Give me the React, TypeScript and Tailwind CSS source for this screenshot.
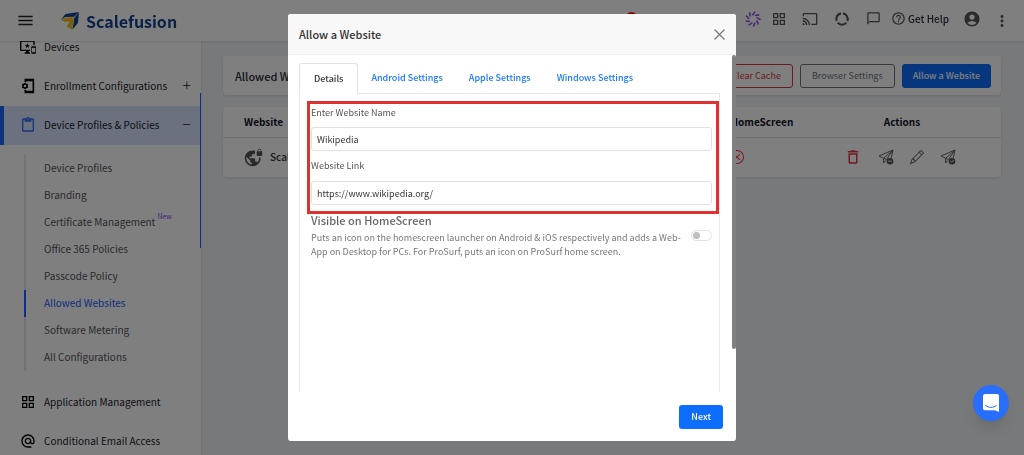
import { useState } from 'react'
import { BsPencil, BsXCircle } from 'react-icons/bs'
import {
  MdAccountCircle,
  MdAlternateEmail,
  MdCast,
  MdChatBubbleOutline,
  MdContentPaste,
  MdDeleteOutline,
  MdHelpOutline,
  MdMenu,
  MdMoreVert,
  MdOutlineGridView,
  MdOutlineImportantDevices,
  MdVpnLock,
} from 'react-icons/md'

const subItems = [
  { label: 'Device Profiles' },
  { label: 'Branding' },
  { label: 'Certificate Management', isNew: true },
  { label: 'Office 365 Policies' },
  { label: 'Passcode Policy' },
  { label: 'Allowed Websites', active: true },
  { label: 'Software Metering' },
  { label: 'All Configurations' },
]

const tabs = ['Details', 'Android Settings', 'Apple Settings', 'Windows Settings']

function Logo() {
  return (
    <a href="#" className="flex items-center gap-[7px] text-[#12408f]">
      <svg viewBox="0 0 17 17" className="size-[18px]" aria-hidden="true">
        <path d="M0 7.4 4.2 1.8 17 0 12.4 4.6 4 4.8Z" fill="#12408f" />
        <path d="M17 0 16 10.4 10.8 16.6 12.6 5.6Z" fill="#12408f" />
        <path d="M0 7.8 4 5.4 12.4 5 9.4 9.2 4.2 9.2Z" fill="#f5bd1f" />
        <path d="M12.4 5.4 10.6 16.8 5.4 13.6 8 9.4Z" fill="#f5bd1f" />
      </svg>
      <span className="text-[16px] leading-6 font-bold">Scalefusion</span>
    </a>
  )
}

function EnrollIcon() {
  return (
    <svg viewBox="0 0 24 24" className="size-4" fill="none" stroke="currentColor" aria-hidden="true">
      <path d="M8 6V2.5h12v19H8V18" strokeWidth="2.4" />
      <path d="M8 3.5h12M8 20.5h12" strokeWidth="3" />
      <circle cx="7.5" cy="12" r="3" strokeWidth="2.4" />
      <path d="M7.5 7v2M7.5 15v2M3.2 9.5l1.7 1M10.1 13.5l1.7 1M3.2 14.5l1.7-1M10.1 10.5l1.7-1" strokeWidth="2" />
    </svg>
  )
}

function SparkIcon() {
  return (
    <svg viewBox="0 0 24 24" className="size-4" fill="none" stroke="#8a50ea" strokeWidth="2.4" strokeLinecap="round" aria-hidden="true">
      {[0, 40, 80, 120, 160, 200, 240, 280, 320].map((a) => (
        <path key={a} d="M11.5 5.5 14.5 1.8" transform={`rotate(${a} 12 12)`} />
      ))}
    </svg>
  )
}

function UsageIcon() {
  return (
    <svg viewBox="0 0 24 24" className="size-4" fill="none" stroke="currentColor" strokeWidth="3.2" aria-hidden="true">
      {[0, 120, 240].map((a) => (
        <path key={a} d="M13.5 3.6A8.5 8.5 0 0 1 20 15" transform={`rotate(${a} 12 12)`} />
      ))}
    </svg>
  )
}

function SendIcon({ badge }: { badge: string }) {
  return (
    <svg viewBox="0 0 16 16" className="size-4" fill="none" stroke="currentColor" strokeLinejoin="round" aria-hidden="true">
      <path d="M8.4 10.5 5.6 9.3 5.6 14 7.8 11.4M5.6 9.3 1 7 15 1 13.2 9M15 1 5.6 9.3M15 1 8.4 10.5" strokeWidth="0.9" />
      <circle cx="12" cy="12.2" r="3.3" fill="currentColor" stroke="none" />
      <path d={badge} stroke="#fff" strokeWidth="1" />
    </svg>
  )
}

function TopBar() {
  return (
    <header className="fixed inset-x-0 top-0 z-10 flex h-[41px] items-center bg-white pr-[13px] pl-4 text-[#555] shadow">
      <button type="button" aria-label="Menu" className="mr-[26px] text-[#222]">
        <MdMenu size={19} />
      </button>
      <Logo />
      <div className="ml-auto flex items-center pb-1">
        <span className="mr-[107px] size-[13px] rounded-full bg-[#ff1a1a]" />
        <button type="button" aria-label="Assistant"><SparkIcon /></button>
        <button type="button" aria-label="Apps" className="ml-2.5"><MdOutlineGridView size={16} /></button>
        <button type="button" aria-label="Cast" className="ml-[15px]"><MdCast size={16} /></button>
        <button type="button" aria-label="Usage" className="ml-4"><UsageIcon /></button>
        <button type="button" aria-label="Messages" className="ml-4"><MdChatBubbleOutline size={15} /></button>
        <a href="#" className="ml-2.5 flex items-center gap-0.5 font-medium text-[#2a2a3a]">
          <MdHelpOutline size={15} className="text-[#555]" />
          Get Help
        </a>
        <button type="button" aria-label="Account" className="ml-3.5"><MdAccountCircle size={18} /></button>
        <button type="button" aria-label="More" className="ml-3 pt-1"><MdMoreVert size={18} /></button>
      </div>
    </header>
  )
}

function Sidebar() {
  const row = 'flex h-[39px] items-center gap-2 pr-[10px] pb-0.5 pl-5 text-[#1c1c2c]'
  const sign = 'ml-auto pb-1 text-[16px] font-light'
  return (
    <nav className="relative h-full w-[201px] shrink-0 overflow-hidden bg-white pt-7 shadow">
      <a href="#" className={row}>
        <MdOutlineImportantDevices size={16} className="text-black" />
        Devices
      </a>
      <a href="#" className={row}>
        <span className="text-black"><EnrollIcon /></span>
        Enrollment Configurations
        <span className={sign}>+</span>
      </a>
      <a href="#" className="flex h-[39px] items-center gap-2 border-l-4 border-[#1a66ff] bg-[#d6e2fd] pr-[10px] pb-0.5 pl-4 text-[#1c1c2c]">
        <MdContentPaste size={16} className="text-[#2f6cf6]" />
        Device Profiles &amp; Policies
        <span className={sign}>−</span>
      </a>
      <ul className="mt-2.5 mb-3 ml-6">
        {subItems.map((item) => (
          <li key={item.label} className={item.active ? 'border-l-2 border-[#2060ff] text-[#2060ff]' : 'border-l-2 border-[#e4e4e8] text-[#55555a]'}>
            <a href="#" className="flex h-[27px] items-center gap-0.5 pb-0.5 pl-[18px]">
              {item.label}
              {item.isNew && <sup className="pb-1 text-[7px] text-[#8b4df0]">New</sup>}
            </a>
          </li>
        ))}
      </ul>
      <a href="#" className={row}>
        <MdOutlineGridView size={16} className="text-black" />
        Application Management
      </a>
      <a href="#" className={row}>
        <MdAlternateEmail size={16} className="text-black" />
        Conditional Email Access
      </a>
      {/* scroll thumb */}
      <span className="absolute top-[93px] right-0 h-[155px] w-px bg-[#2060ff]" />
    </nav>
  )
}

function Websites() {
  return (
    <main className="flex-1 pt-14 pr-[23px] pl-[22px]">
      <section className="flex h-[39px] items-center gap-[7px] rounded-sm bg-white pr-[10px] pl-3 text-[9px] shadow-sm">
        <h1 className="mr-auto text-[11px] font-medium text-[#2a2a3a]">Allowed Websites</h1>
        <button type="button" className="h-6 rounded-[3px] border border-[#dc3545] px-[11px] text-[#dc3545]">Clear Cache</button>
        <button type="button" className="h-6 rounded-[3px] border border-[#6c757d] px-[11px] text-[#6c757d]">Browser Settings</button>
        <button type="button" className="h-6 rounded-[3px] bg-[#0d6efd] px-[11px] font-medium text-white">Allow a Website</button>
      </section>
      <table className="mt-3 w-full table-fixed rounded-sm bg-white shadow-sm">
        <thead>
          <tr className="h-[30px] border-b border-[#dfe1e5] text-[#14142a]">
            <th className="pl-[21px] text-left font-bold">Website</th>
            <th className="w-[132px] font-bold whitespace-nowrap">Visible on HomeScreen</th>
            <th className="w-[198px] font-bold">Actions</th>
          </tr>
        </thead>
        <tbody>
          <tr className="h-10">
            <td className="pl-[21px]">
              <span className="flex items-center gap-[7px] font-medium text-[#333]">
                <MdVpnLock size={19} className="text-[#555]" />
                Scalefusion
              </span>
            </td>
            <td>
              <BsXCircle size={14} className="mx-auto text-[#ff2233]" />
            </td>
            <td>
              <span className="flex items-center justify-center gap-4 pr-1 text-[#555]">
                <button type="button" aria-label="Delete" className="text-[#dc3545]"><MdDeleteOutline size={18} /></button>
                <button type="button" aria-label="Unpublish"><SendIcon badge="M10.2 12.2h3.6" /></button>
                <button type="button" aria-label="Edit"><BsPencil size={14} /></button>
                <button type="button" aria-label="Publish"><SendIcon badge="M10.5 12.2l1.1 1.1 2-2.2" /></button>
              </span>
            </td>
          </tr>
        </tbody>
      </table>
    </main>
  )
}

function WebsiteDialog() {
  const [tab, setTab] = useState('Details')
  const [name, setName] = useState('Wikipedia')
  const [link, setLink] = useState('https://www.wikipedia.org/')
  const [visible, setVisible] = useState(false)
  const field = 'block h-6 w-full rounded-[3px] border border-[#dee2e6] bg-white px-[5px] text-[#333] outline-none'

  return (
    <div className="fixed inset-0 z-20 flex justify-center bg-black/50 py-3.5 text-[9px]">
      <div role="dialog" aria-labelledby="dialog-title" className="relative flex h-full w-[448px] flex-col overflow-hidden rounded-[3px] bg-white">
        <div className="flex h-[41px] shrink-0 items-center justify-between border-b border-[#eee] bg-[#f8f8f8] px-[11px]">
          <h2 id="dialog-title" className="text-[11px] font-medium text-[#333]">Allow a Website</h2>
          <button type="button" aria-label="Close" className="text-[#777]">
            <svg viewBox="0 0 11 11" className="size-[11px]" stroke="currentColor" strokeWidth="1.2">
              <path d="M.5.5l10 10M10.5.5l-10 10" />
            </svg>
          </button>
        </div>
        <div className="flex min-h-0 flex-1 flex-col pt-2 pr-4 pl-[11px]">
          <div role="tablist" className="flex h-[31px] shrink-0">
            {tabs.map((t) => (
              <button
                key={t}
                type="button"
                role="tab"
                aria-selected={t === tab}
                onClick={() => setTab(t)}
                className={
                  t === tab
                    ? 'rounded-t-[3px] border border-b-0 border-[#dee2e6] px-3.5 font-medium text-[#333]'
                    : 'border-b border-[#e6e8eb] px-[13px] font-medium text-[#1a78ff]'
                }
              >
                {t}
              </button>
            ))}
            <span className="flex-1 border-b border-[#e6e8eb]" />
          </div>
          <div className="flex-1 border-x border-[#e6e8eb] pt-[7px] pl-[7px]">
            <div className="border-3 border-[#e03131] pr-1 pb-[6px] pl-px">
              <label htmlFor="site-name" className="block pt-px pb-[6px] leading-4 text-[#555]">Enter Website Name</label>
              <input id="site-name" value={name} onChange={(e) => setName(e.target.value)} className={field} />
              <label htmlFor="site-link" className="block py-[7px] leading-4 text-[#555]">Website Link</label>
              <input id="site-link" value={link} onChange={(e) => setLink(e.target.value)} className={field} />
            </div>
            <div className="flex items-start justify-between pr-[7px] pl-1">
              <div className="w-[374px]">
                <h3 id="visible-title" className="text-[11px] leading-3 font-medium text-[#666]">Visible on HomeScreen</h3>
                <p className="mt-[5px] leading-3.5 text-[#777]">
                  Puts an icon on the homescreen launcher on Android &amp; iOS respectively and adds a Web-App on Desktop for PCs. For ProSurf, puts an icon on ProSurf home screen.
                </p>
              </div>
              <input
                type="checkbox"
                role="switch"
                aria-labelledby="visible-title"
                checked={visible}
                onChange={(e) => setVisible(e.target.checked)}
                className="mt-4 flex h-[11px] w-[21px] appearance-none items-center rounded-full border border-[#dee2e6] px-px before:size-[7px] before:rounded-full before:bg-[#bfbfbf] checked:justify-end"
              />
            </div>
          </div>
        </div>
        <div className="flex h-[49px] shrink-0 items-center justify-end pr-[13px]">
          <button type="button" className="h-6 rounded-[3px] bg-[#0d6efd] px-3 font-medium text-white">Next</button>
        </div>
        {/* scroll thumb */}
        <span className="absolute top-[41px] right-0 h-[294px] w-1 rounded-sm bg-[#808080]" />
      </div>
    </div>
  )
}

export default function App() {
  return (
    <div className="h-screen overflow-hidden bg-[#f0f3f7] font-['Noto_Sans_CJK_SC','Noto_Sans',sans-serif] text-[10px] leading-4">
      <TopBar />
      <div className="flex h-full">
        <Sidebar />
        <Websites />
      </div>
      <WebsiteDialog />
      <button
        type="button"
        aria-label="Open chat"
        className="fixed right-[15px] bottom-[34px] z-30 flex size-9 items-center justify-center rounded-full bg-[#286efa] shadow-lg"
      >
        <svg viewBox="0 0 16 18" className="h-[18px] w-4" aria-hidden="true">
          <path d="M2 0h12a2 2 0 0 1 2 2v16l-4-1.8H2a2 2 0 0 1-2-2V2a2 2 0 0 1 2-2Z" fill="#fff" />
          <path d="M2.6 11.6c3 2.4 7.8 2.4 10.8 0" fill="none" stroke="#286efa" strokeLinecap="round" />
        </svg>
      </button>
    </div>
  )
}
